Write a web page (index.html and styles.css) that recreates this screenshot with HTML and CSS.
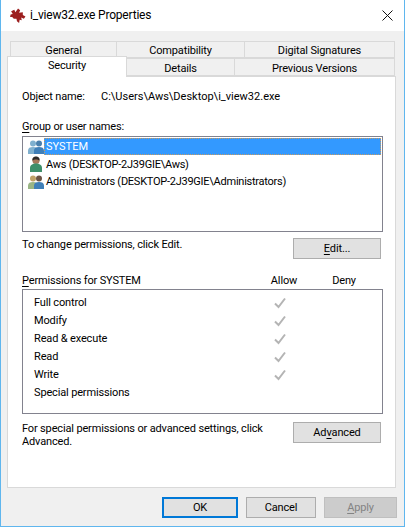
FILE: index.html
```html
<!DOCTYPE html>
<html lang="en">
<head>
<meta charset="utf-8">
<title>i_view32.exe Properties</title>
<link rel="stylesheet" href="styles.css">
</head>
<body>
<svg width="0" height="0" class="defs">
  <defs>
    <symbol id="blue" viewBox="0 0 16 16">
      <circle cx="5" cy="4.5" r="3" fill="#7fb0cf"/>
      <path d="M0 15v-3.500c0-2.500 2-3.500 5-3.500s5 1 5 3.500V15z" fill="#7fb0cf"/>
      <circle cx="11" cy="4.500" r="3" fill="#4a80ad"/>
      <path d="M6 15v-3.500C6 9 8 8 11 8s5 1 5 3.500V15z" fill="#3f7fb8"/>
    </symbol>
    <symbol id="single" viewBox="0 0 16 16">
      <circle cx="8" cy="4.500" r="3.600" fill="#a8785a"/>
      <path d="M4.500 4.500C4 1.500 6 .5 8 .5s4 1 3.500 4C10 3 6 3 4.500 4.500z" fill="#2d2a28"/>
      <path d="M2 16v-4c0-3 2.500-4.500 6-4.500s6 1.500 6 4.500v4z" fill="#3f8f6a"/>
    </symbol>
    <symbol id="group" viewBox="0 0 16 16">
      <circle cx="5" cy="4.500" r="3" fill="#c0a268"/>
      <path d="M0 15v-3.500C0 9 2 8 5 8s5 1 5 3.500V15z" fill="#9ab585"/>
      <circle cx="11" cy="4.500" r="3" fill="#6b5444"/>
      <path d="M6 15v-3.500C6 9 8 8 11 8s5 1 5 3.500V15z" fill="#3f7fb8"/>
    </symbol>
    <symbol id="check" viewBox="0 0 12 12">
      <path d="M1 6.500 4.500 10 11 1.500" fill="none" stroke="#b4b4b4" stroke-width="2"/>
    </symbol>
  </defs>
</svg>
<div class="window">
  <header class="titlebar">
    <svg class="appicon" viewBox="0 0 16 16" width="17" height="17">
      <path d="M2 4 5 2.500 6 5 8.500 1.500 10.500 3 9.500 5.500 13 5 13 7.500 15.500 9 14 11 11.500 9.800 12 12.500 10 12 9.500 15 7.500 13.500 7 11 4.500 11 3 9.500 1 9.500 1.500 7 3.500 6.500z" fill="#9c1f1f"/>
    </svg>
    <span class="title">i_view32.exe Properties</span>
    <svg class="close" viewBox="0 0 11 11" width="11" height="11">
      <path d="M0.500 0.500 10.500 10.500M10.500 0.500 0.500 10.500" stroke="#111" fill="none"/>
    </svg>
  </header>
  <main class="dialog">
    <div class="tabs">
      <div class="tabrow top">
        <div class="tab t-general">General</div>
        <div class="tab t-compat">Compatibility</div>
        <div class="tab t-digital">Digital Signatures</div>
      </div>
      <div class="tabrow bottom">
        <div class="tab selected">Security</div>
        <div class="tab t-details">Details</div>
        <div class="tab t-prev">Previous Versions</div>
      </div>
    </div>
    <section class="panel">
      <div class="object">
        <span class="obj-label">Object name:</span>
        <span class="path">C:\Users\Aws\Desktop\i_view32.exe</span>
      </div>
      <div class="label group-label"><u>G</u>roup or user names:</div>
      <div class="box users">
        <div class="user"><svg class="uicon"><use href="#blue"/></svg><span class="uname sel">SYSTEM</span></div>
        <div class="user"><svg class="uicon"><use href="#single"/></svg><span class="uname">Aws (DESKTOP-2J39GIE\Aws)</span></div>
        <div class="user"><svg class="uicon"><use href="#group"/></svg><span class="uname">Administrators (DESKTOP-2J39GIE\Administrators)</span></div>
      </div>
      <div class="action edit-row">
        <div class="hint">To change permissions, click Edit.</div>
        <div class="btn side"><span><u>E</u>dit...</span></div>
      </div>
      <div class="perm-head">
        <span class="perm-title"><u>P</u>ermissions for SYSTEM</span>
        <span class="col">Allow</span>
        <span class="col">Deny</span>
      </div>
      <div class="box perms">
        <div class="perm"><span class="pname">Full control</span><svg class="chk"><use href="#check"/></svg></div>
        <div class="perm"><span class="pname">Modify</span><svg class="chk"><use href="#check"/></svg></div>
        <div class="perm"><span class="pname">Read &amp; execute</span><svg class="chk"><use href="#check"/></svg></div>
        <div class="perm"><span class="pname">Read</span><svg class="chk"><use href="#check"/></svg></div>
        <div class="perm"><span class="pname">Write</span><svg class="chk"><use href="#check"/></svg></div>
        <div class="perm"><span class="pname">Special permissions</span></div>
      </div>
      <div class="action adv-row">
        <div class="hint">For special permissions or advanced settings, click<br>Advanced.</div>
        <div class="btn side"><span>Ad<u>v</u>anced</span></div>
      </div>
    </section>
    <footer class="footer">
      <div class="btn fbtn ok">OK</div>
      <div class="btn fbtn cancel">Cancel</div>
      <div class="btn fbtn apply"><span><u>A</u>pply</span></div>
    </footer>
  </main>
</div>
</body>
</html>
```
FILE: styles.css
```css
html, body {
  margin: 0;
  padding: 0;
}
body {
  width: 405px;
  height: 527px;
  overflow: hidden;
  font-family: Roboto, "Noto Sans", sans-serif;
  font-size: 11px;
  letter-spacing: -0.15px;
  line-height: 13px;
  color: #000;
}
.defs {
  position: absolute;
}
u {
  text-underline-offset: 2px;
}
.window {
  box-sizing: border-box;
  width: 405px;
  height: 527px;
  border: 1px solid #5fb6ee;
  border-top: 0;
  display: flex;
  flex-direction: column;
  background: #f0f0f0;
}
.titlebar {
  height: 31px;
  flex: none;
  background: #fff;
  display: flex;
  align-items: center;
  padding: 0 11px 0 8px;
}
.appicon {
  margin-right: 4px;
}
.title {
  font-size: 12px;
  letter-spacing: -0.2px;
  flex: 1;
}
.dialog {
  flex: 1;
  display: flex;
  flex-direction: column;
  padding: 10px 0 0 6px;
  min-height: 0;
}
.tabs {
  width: 389px;
  flex: none;
}
.tabrow {
  display: flex;
}
.tab {
  box-sizing: border-box;
  text-align: center;
  background: #f0f0f0;
  border: 1px solid #d9d9d9;
  border-bottom: 0;
  margin-left: -1px;
}
.top {
  height: 17px;
  padding-left: 3px;
}
.top .tab {
  height: 17px;
  line-height: 17px;
  border-bottom: 1px solid #d9d9d9;
}
.t-general { width: 107px; margin-left: 0; }
.t-compat { width: 129px; }
.t-digital { width: 151px; }
.bottom {
  height: 18px;
}
.bottom .tab {
  height: 18px;
  line-height: 19px;
  border-bottom: 1px solid #d9d9d9;
}
.bottom .selected {
  width: 120px;
  height: 21px;
  margin: -2px 0 -1px 0;
  background: #fff;
  border-color: #d9d9d9;
  border-bottom: 0;
  line-height: 17px;
  position: relative;
  z-index: 1;
}
.t-details { width: 109px; }
.t-prev { width: 161px; }
.panel {
  box-sizing: border-box;
  width: 389px;
  height: 412px;
  flex: none;
  background: #fff;
  border: 1px solid #d9d9d9;
  padding: 13px 13px 0 14px;
}
.object {
  display: flex;
  height: 14px;
}
.obj-label {
  width: 79px;
}
.path {
  letter-spacing: 0;
}
.group-label {
  margin-top: 15px;
  height: 16px;
  line-height: 16px;
}
.box {
  box-sizing: border-box;
  width: 361px;
  background: #fff;
  border: 1px solid #82828e;
}
.users {
  height: 96px;
  margin-top: 1px;
  padding: 1px 0 0 5px;
  letter-spacing: -0.25px;
}
.user {
  display: flex;
  align-items: center;
  height: 17.5px;
}
.uicon {
  width: 16px;
  height: 16px;
  flex: none;
}
.uname {
  padding: 0 2px;
  height: 17px;
  line-height: 17px;
}
.sel {
  flex: 1;
  margin-right: 1px;
  background: #3399ff;
  color: #fff;
  letter-spacing: 0;
  outline: 1px dotted #c89a60;
  outline-offset: -1px;
}
.action {
  display: flex;
  justify-content: space-between;
}
.edit-row {
  margin-top: 6px;
  height: 21px;
  width: 359px;
}
.hint {
  line-height: 13px;
}
.btn {
  box-sizing: border-box;
  background: #e1e1e1;
  border: 1px solid #adadad;
  height: 21px;
  line-height: 19px;
  text-align: center;
}
.side {
  width: 88px;
  flex: none;
}
.perm-head {
  display: flex;
  gap: 14px;
  margin-top: 12px;
  height: 18px;
  line-height: 20px;
}
.perm-title {
  width: 225px;
}
.col {
  width: 46px;
  text-align: center;
}
.perms {
  height: 125px;
  padding: 4px 0 0 11px;
}
.perm {
  height: 18px;
  line-height: 18px;
  display: flex;
  align-items: center;
}
.pname {
  width: 240px;
}
.chk {
  width: 12px;
  height: 12px;
  margin-top: -1px;
}
.adv-row {
  margin-top: 8px;
  width: 359px;
}
.footer {
  display: flex;
  gap: 8px;
  margin-top: 9px;
  padding-left: 155px;
}
.fbtn {
  width: 76px;
  height: 21px;
}
.ok {
  border: 2px solid #0078d7;
  line-height: 17px;
}
.cancel {
  width: 70px;
}
.apply {
  width: 73px;
  background: #cccccc;
  border-color: #bfbfbf;
  color: #838383;
}
```
